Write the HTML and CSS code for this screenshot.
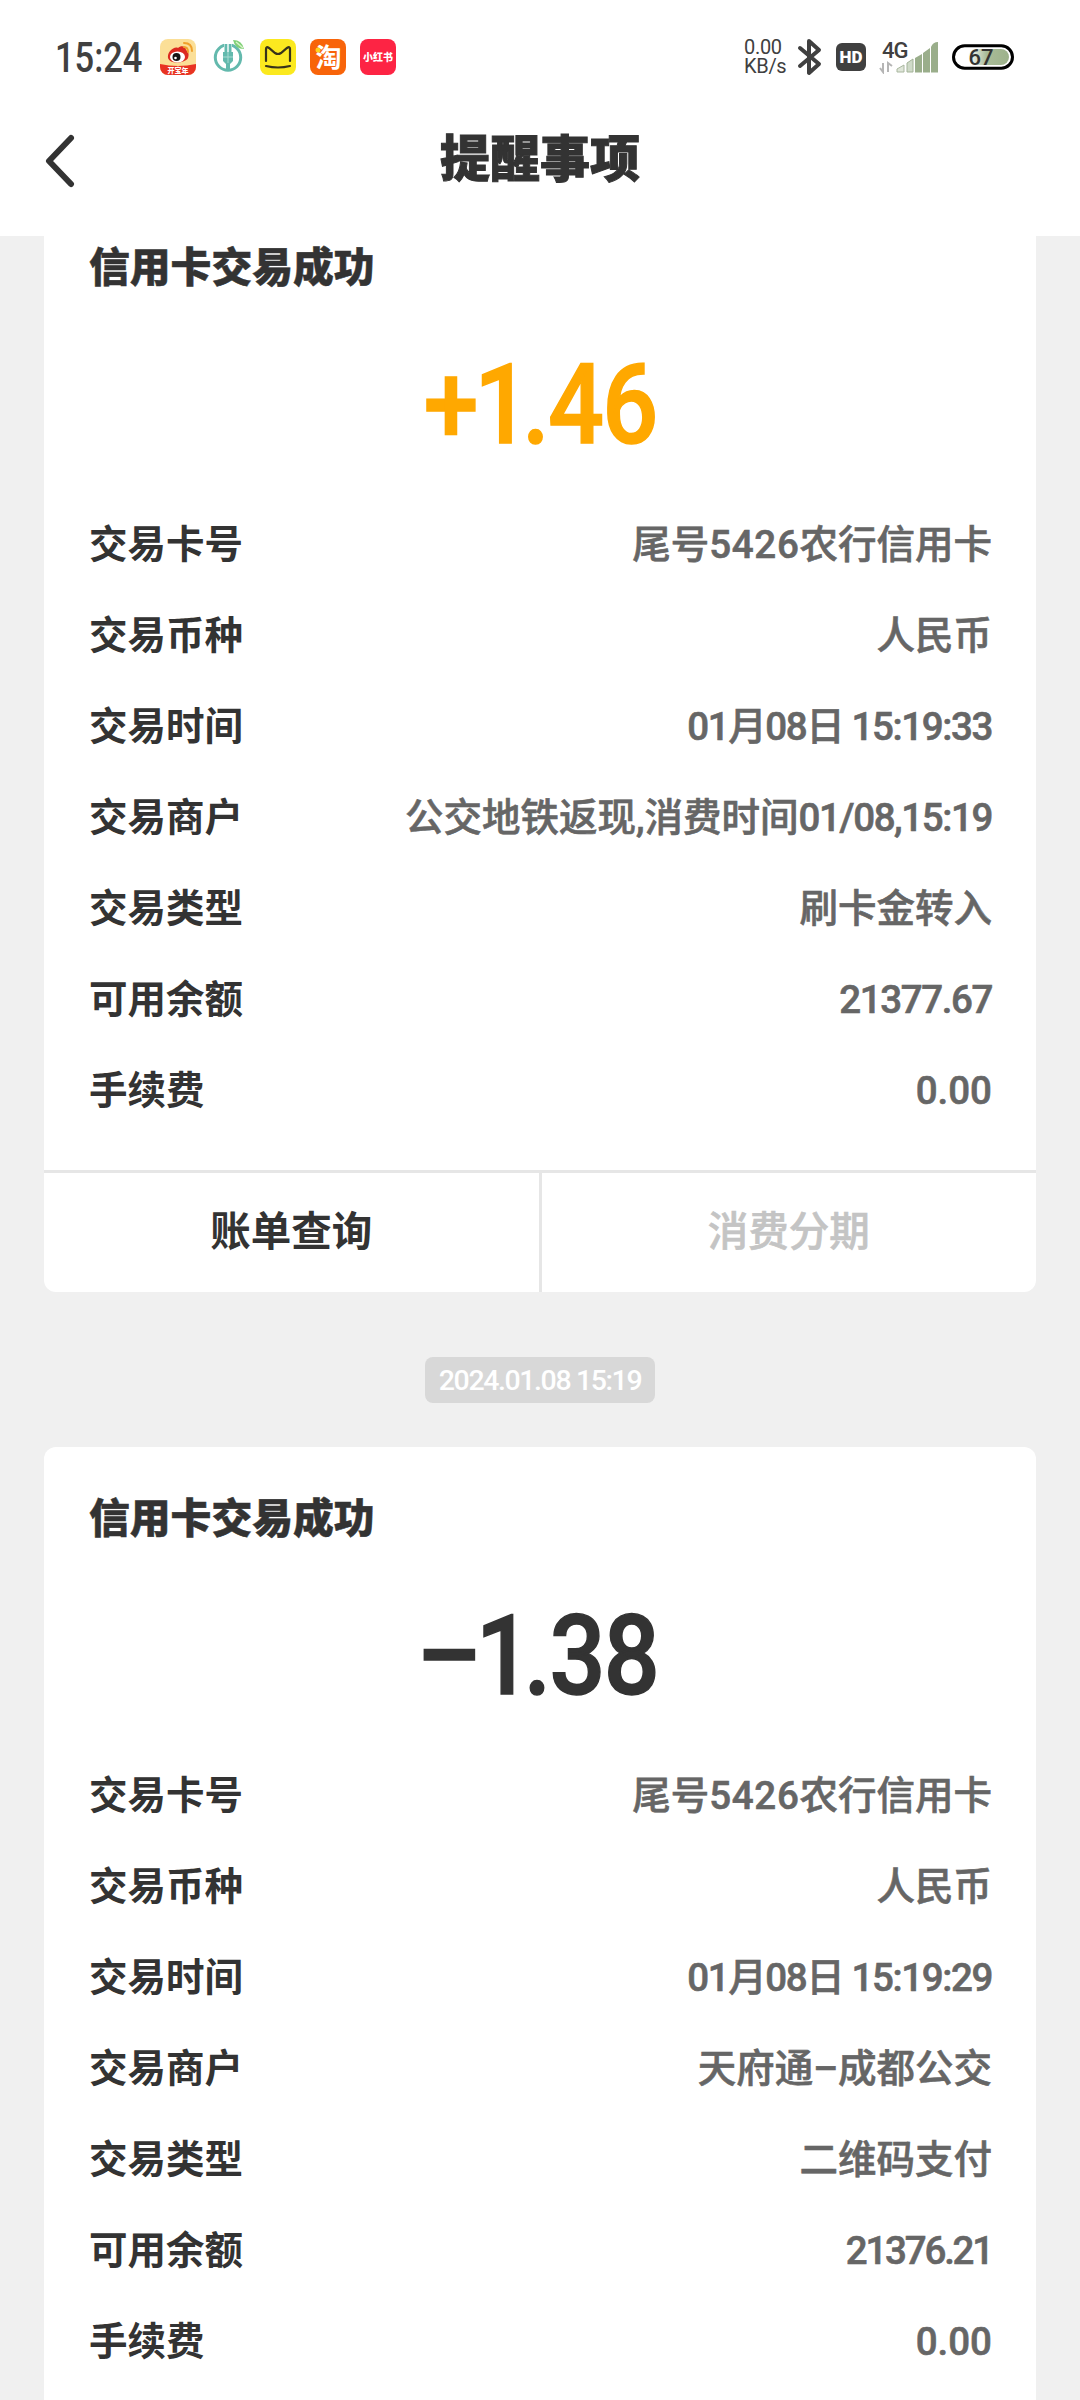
FILE: index.html
```html
<!DOCTYPE html>
<html lang="zh-CN">
<head>
  <meta charset="UTF-8">
  <title>提醒事项</title>
  <link rel="stylesheet" href="styles.css">
</head>
<body>
  <div class="phone">
    <div class="status-bar">
      <div class="clock">15:24</div>
      <div class="apps">
        <!-- weibo -->
        <svg width="36" height="36" viewBox="0 0 36 36">
          <defs><clipPath id="wb"><rect width="36" height="36" rx="8"/></clipPath></defs>
          <g clip-path="url(#wb)">
            <rect width="36" height="36" fill="#fbdf97"/>
            <path d="M0 25Q18 29 36 25V36H0Z" fill="#e83323"/>
            <path d="M8 19C7 13 14 7 18 9C21 6 26 7 26 11C29 13 29 16 28 19C26 24 10 26 8 19Z" fill="#dc2a20"/>
            <ellipse cx="17.500" cy="18" rx="7.500" ry="5.500" fill="#fff"/>
            <circle cx="16.500" cy="18" r="4" fill="#151515"/>
            <circle cx="15.500" cy="19" r="1.300" fill="#fff"/>
            <path d="M24 8Q28 8 28 13M24 4Q32 4 32 12" fill="none" stroke="#f0a02c" stroke-width="2" stroke-linecap="round"/>
            <text x="18" y="33.500" class="weibo-text">开宝年</text>
          </g>
        </svg>
        <!-- agricultural bank -->
        <svg width="36" height="36" viewBox="0 0 36 36">
          <circle cx="18" cy="18.500" r="12.700" fill="none" stroke="#63b9ad" stroke-width="3"/>
          <path d="M14 4H22V13H14Z" fill="#fff"/>
          <path d="M14.500 5H17.300V14H14.500ZM18.700 5H21.500V14H18.700ZM13 13H23V22L20 25V31H16V25L13 22Z" fill="#63b9ad"/>
          <path d="M18 13V24M13 18H23" stroke="#a8dad2" stroke-width="1"/>
          <path d="M23 1Q32 1 34 10Q25 10 23 1Z" fill="#7fd077"/>
          <path d="M26 3L33 9" stroke="#d8f3c8" stroke-width="1.500"/>
        </svg>
        <!-- meituan -->
        <svg width="36" height="36" viewBox="0 0 36 36">
          <rect width="36" height="36" rx="8" fill="#fbe91f"/>
          <path d="M6 22V10Q6 7 9 9L15 14Q18 16 21 14L27 9Q30 7 30 10V22M6 27Q18 30 30 27" fill="none" stroke="#37331a" stroke-width="2.200" stroke-linecap="round"/>
        </svg>
        <!-- taobao -->
        <svg width="36" height="36" viewBox="0 0 36 36">
          <rect width="36" height="36" rx="8" fill="#f8640a"/>
          <text x="18.500" y="27.500" class="taobao-text">淘</text>
          <circle cx="8" cy="11" r="2.500" fill="#ffd21e"/>
        </svg>
        <!-- xiaohongshu -->
        <svg width="36" height="36" viewBox="0 0 36 36">
          <rect width="36" height="36" rx="8" fill="#fd2444"/>
          <text x="18" y="22" class="red-text">小红书</text>
        </svg>
      </div>
      <div class="net-speed"><span>0.00</span><span>KB/s</span></div>
      <svg class="bluetooth" width="26" height="38" viewBox="0 0 26 38">
        <path d="M3 10L22 26L12 35V3L22 12L3 28" fill="none" stroke="#404040" stroke-width="4" stroke-linecap="round" stroke-linejoin="round"/>
      </svg>
      <div class="hd">HD</div>
      <svg class="signal" width="60" height="34" viewBox="0 0 60 34">
        <path d="M4 23V32L1 28M9 32V23L13 26" fill="none" stroke="#b5b5b5" stroke-width="2"/>
        <path d="M18 32V29L25 25V32Z" fill="#dfe6d9" stroke="#a9b79f"/>
        <path d="M28 32V23L34 19V32Z" fill="#cfdac8" stroke="#a3b398"/>
        <path d="M36 32.500V18L43 14V32.500ZM44 32.500V13L51 8V32.500ZM52 32.500V7Q54 2 59 2V32.500Z" fill="#9aae8b"/>
        <text x="3" y="17.500" class="signal-text">4G</text>
      </svg>
      <svg class="battery" width="62" height="26" viewBox="0 0 62 26">
        <defs>
          <linearGradient id="level" x1="0" x2="1">
            <stop offset="0" stop-color="#fff"/>
            <stop offset=".45" stop-color="#a9bb98"/>
            <stop offset="1" stop-color="#9db28b"/>
          </linearGradient>
        </defs>
        <rect x="1.500" y="1.800" width="59" height="22.400" rx="11.200" fill="#fff" stroke="#000" stroke-width="3"/>
        <rect x="16" y="5" width="41" height="16" rx="8" fill="url(#level)"/>
        <text x="16.500" y="20.500" class="battery-text">67</text>
      </svg>
    </div>

    <div class="nav-bar">
      <svg class="back" width="34" height="54" viewBox="0 0 34 54">
        <path d="M30 4L8 27L30 50" fill="none" stroke="#333" stroke-width="6" stroke-linecap="round" stroke-linejoin="round"/>
      </svg>
      <h1>提醒事项</h1>
    </div>

    <div class="list">
      <div class="card card-first">
        <h2>信用卡交易成功</h2>
        <div class="amount income"><div class="number">+<span class="one">1</span>.46</div></div>
        <div class="row"><span class="label">交易卡号</span><span class="value">尾号<span class="tail">5426</span>农行信用卡</span></div>
        <div class="row"><span class="label">交易币种</span><span class="value">人民币</span></div>
        <div class="row"><span class="label">交易时间</span><span class="value time">01月08日 15:19:33</span></div>
        <div class="row"><span class="label">交易商户</span><span class="value">公交地铁返现,消费时间<span class="time">01/08,15:19</span></span></div>
        <div class="row"><span class="label">交易类型</span><span class="value">刷卡金转入</span></div>
        <div class="row"><span class="label">可用余额</span><span class="value time">21377.67</span></div>
        <div class="row"><span class="label">手续费</span><span class="value">0.00</span></div>
        <div class="actions">
          <div class="action">账单查询</div>
          <div class="action disabled">消费分期</div>
        </div>
      </div>

      <div class="stamp"><span>2024.01.08 15:19</span></div>

      <div class="card card-last">
        <h2>信用卡交易成功</h2>
        <div class="amount"><div class="number"><span class="minus">−</span><span class="one">1</span>.38</div></div>
        <div class="row"><span class="label">交易卡号</span><span class="value">尾号<span class="tail">5426</span>农行信用卡</span></div>
        <div class="row"><span class="label">交易币种</span><span class="value">人民币</span></div>
        <div class="row"><span class="label">交易时间</span><span class="value time">01月08日 15:19:29</span></div>
        <div class="row"><span class="label">交易商户</span><span class="value">天府通–成都公交</span></div>
        <div class="row"><span class="label">交易类型</span><span class="value">二维码支付</span></div>
        <div class="row"><span class="label">可用余额</span><span class="value balance">21376.21</span></div>
        <div class="row"><span class="label">手续费</span><span class="value">0.00</span></div>
      </div>
    </div>
  </div>
</body>
</html>
```
FILE: styles.css
```css
* {
  box-sizing: border-box;
}
body {
  margin: 0;
  font-family: Roboto, "Noto Sans CJK SC", sans-serif;
  color: #333;
  background-color: #f0f0f0;
}
.phone {
  width: 1080px;
  height: 2400px;
  overflow: hidden;
  display: flex;
  flex-direction: column;
}

/* status bar */
.status-bar {
  height: 114px;
  flex: none;
  display: flex;
  align-items: center;
  padding: 0 66px 0 55px;
  background-color: #fff;
}
.clock {
  width: 105px;
  font-size: 42px;
  font-weight: 500;
  color: #404040;
  white-space: nowrap;
  transform: scaleX(0.82);
  transform-origin: left;
}
.apps {
  display: flex;
  gap: 14px;
}
.net-speed {
  display: flex;
  flex-direction: column;
  width: 44px;
  margin-left: auto;
  font-size: 20px;
  line-height: 19px;
  letter-spacing: -0.300px;
  color: #404040;
  white-space: nowrap;
}
.bluetooth {
  margin-left: 9px;
}
.hd {
  width: 30px;
  height: 28px;
  margin-left: 13px;
  border-radius: 6px;
  background-color: #404040;
  color: #fff;
  font-size: 17px;
  font-weight: 900;
  line-height: 29px;
  text-align: center;
}
.signal {
  margin-left: 13px;
}
.battery {
  margin-left: 13px;
}
.weibo-text {
  font-size: 7px;
  font-weight: 900;
  text-anchor: middle;
  fill: #fff;
}
.taobao-text {
  font-size: 26px;
  font-weight: 700;
  text-anchor: middle;
  fill: #fff;
}
.red-text {
  font-size: 10px;
  font-weight: 900;
  text-anchor: middle;
  fill: #fff;
}
.signal-text {
  font-size: 22px;
  font-weight: 500;
  letter-spacing: -1px;
  fill: #404040;
}
.battery-text {
  font-size: 22px;
  font-weight: 500;
  fill: #333;
}

/* title bar */
.nav-bar {
  height: 122px;
  flex: none;
  display: grid;
  grid-template-columns: 1fr auto 1fr;
  padding: 0 41px 0 41px;
  background-color: #fff;
}
.back {
  margin-top: 20px;
}
h1 {
  margin: 11px 0 0;
  font-size: 50px;
  font-weight: 900;
  line-height: 70px;
  -webkit-text-stroke: 1px #333;
}

/* messages */
.list {
  flex: 1;
  min-height: 0;
  overflow: hidden;
  padding: 0 44px;
}
.card {
  border-radius: 12px;
  background-color: #fff;
  padding-top: 47px;
}
.card-first {
  margin-top: -40px;
}
.card-last {
  padding-bottom: 40px;
}
h2 {
  margin: 0 45px;
  font-size: 40.800px;
  font-weight: 900;
  line-height: 50px;
  -webkit-text-stroke: 0.500px #333;
}
.amount {
  display: flex;
  justify-content: center;
  height: 206px;
  padding-top: 9px;
  font-size: 112px;
  font-weight: 500;
  line-height: 206px;
}
.number {
  letter-spacing: -2px;
  transform: scaleX(0.88);
  -webkit-text-stroke: 1.500px currentColor;
}
.one {
  margin: 0 -7px 0 -3px;
}
.minus {
  display: inline-block;
  margin-right: 4px;
  transform: scaleX(1.22);
}
.income {
  color: #ffa800;
}
.row {
  display: flex;
  justify-content: space-between;
  height: 91px;
  padding: 0 44px 0 45px;
  font-size: 38.500px;
  font-weight: 500;
  line-height: 91px;
  white-space: nowrap;
}
.label {
  font-weight: 700;
}
.value {
  color: #666;
  -webkit-text-stroke: 0.600px #666;
}
.time {
  letter-spacing: -1.400px;
}
.tail {
  letter-spacing: 0.700px;
}
.balance {
  letter-spacing: -2.200px;
}
.actions {
  display: flex;
  height: 122px;
  margin-top: 34px;
  border-top: 3px solid #e6e6e6;
}
.action {
  flex: 1;
  font-size: 40.500px;
  font-weight: 700;
  line-height: 118px;
  text-align: center;
}
.disabled {
  border-left: 3px solid #e6e6e6;
  color: #c4c4c4;
  font-weight: 500;
  -webkit-text-stroke: 0.600px #c4c4c4;
}
.stamp {
  display: flex;
  justify-content: center;
  padding: 65px 0 44px;
}
.stamp span {
  width: 230px;
  height: 46px;
  border-radius: 8px;
  background-color: #d8d8d8;
  color: #fff;
  font-size: 28.500px;
  font-weight: 500;
  letter-spacing: -1.400px;
  line-height: 47px;
  text-align: center;
  white-space: nowrap;
}
```
